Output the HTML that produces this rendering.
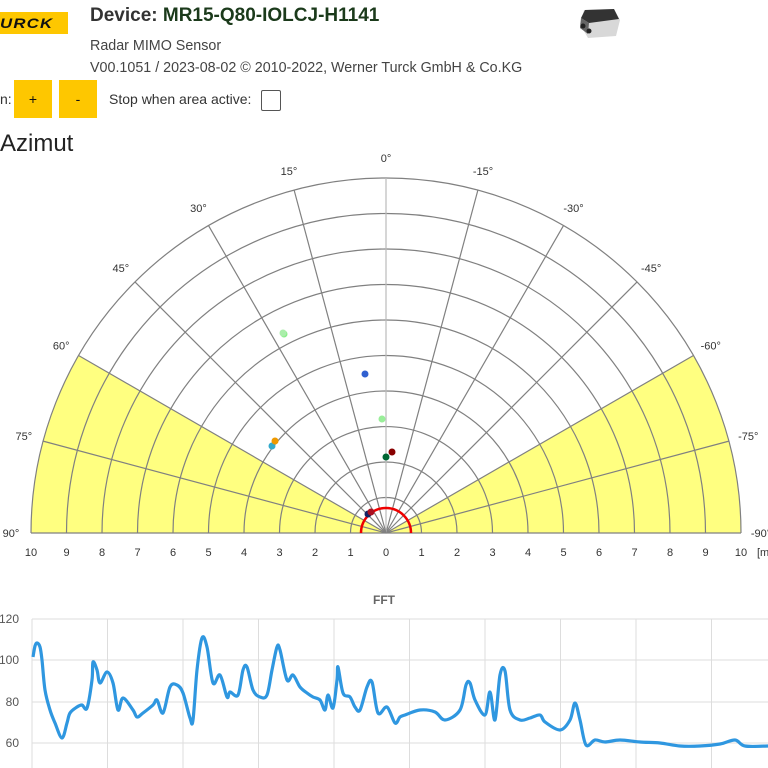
<!DOCTYPE html>
<html><head><meta charset="utf-8">
<style>
body{margin:0;width:768px;height:768px;overflow:hidden;background:#fff;font-family:"Liberation Sans",Arial,sans-serif;position:relative}
.a{position:absolute;white-space:nowrap}
.btn{position:absolute;background:#fec700;width:38px;height:38px;top:80px;text-align:center;line-height:38px;font-size:14px;color:#111}
</style></head><body>
<div class="a" style="left:0;top:12px;width:68px;height:22px;background:#fec700"></div>
<div class="a" style="left:0;top:15px;font:italic 900 14px 'Liberation Sans';letter-spacing:1px;color:#111;transform:scaleX(1.2);transform-origin:0 0">URCK</div>
<div class="a" style="left:90px;top:5px;font-size:19px;font-weight:bold;color:#333">Device: <span style="color:#1b3a1b">MR15-Q80-IOLCJ-H1141</span></div>
<div class="a" style="left:90px;top:38px;font-size:14.3px;color:#444">Radar MIMO Sensor</div>
<div class="a" style="left:90px;top:60px;font-size:14.3px;color:#444">V00.1051 / 2023-08-02 © 2010-2022, Werner Turck GmbH &amp; Co.KG</div>
<div class="a" style="left:0;top:91px;font-size:14px;color:#333">n:</div>
<div class="btn" style="left:14px">+</div>
<div class="btn" style="left:59px">-</div>
<div class="a" style="left:109px;top:91px;font-size:14px;color:#333">Stop when area active:</div>
<div class="a" style="left:261px;top:90px;width:18px;height:19px;border:1px solid #555;border-radius:2px"></div>
<div class="a" style="left:0;top:130px;font-size:24px;color:#222">Azimut</div>
<svg class="a" style="left:576px;top:6px" width="48" height="36"><path d="M8,4 L38,3 L44,14 L40,30 L12,32 L4,18 Z" fill="#d8d8d8"/><path d="M9,4 L38,3 L43,13 L13,17 L5,12 Z" fill="#333"/><path d="M5,12 L13,17 L12,28 L4,22 Z" fill="#666"/><circle cx="7" cy="20" r="2.5" fill="#222"/><circle cx="13" cy="25" r="2.5" fill="#222"/></svg>
<svg id="s" class="a" style="left:0;top:0" width="768" height="768" font-family="Liberation Sans, Arial, sans-serif"></svg>
<script>
var s=document.getElementById('s'),h='';
var cx=386,cy=533,R=355,k=35.5;
function P(r,a){a=a*Math.PI/180;return [cx-r*Math.sin(a),cy-r*Math.cos(a)];}
function wedge(a1,a2){var p1=P(R,a1),p2=P(R,a2);return 'M'+cx+','+cy+'L'+p1+'A'+R+','+R+' 0 0,'+(a2>a1?0:1)+' '+p2+'Z';}
h+='<path d="'+wedge(60,90)+'" fill="#ffff80"/>';
h+='<path d="'+wedge(-60,-90)+'" fill="#ffff80"/>';
for(var i=1;i<=10;i++){var r=i*k;h+='<path d="M'+(cx-r)+','+cy+'A'+r+','+r+' 0 0,1 '+(cx+r)+','+cy+'" fill="none" stroke="#808080" stroke-width="1.2"/>';}
for(var a=-90;a<=90;a+=15){var p=P(R,a);h+='<line x1="'+cx+'" y1="'+cy+'" x2="'+p[0]+'" y2="'+p[1]+'" stroke="'+(a==0?'#bbb':'#808080')+'" stroke-width="1.2"/>';
var q=P(375,a);h+='<text x="'+q[0]+'" y="'+(q[1]+4)+'" font-size="11" text-anchor="middle" fill="#333">'+a+'°</text>';}
h+='<path d="M361,533A25,25 0 0,1 411,533" fill="none" stroke="#e00" stroke-width="2.5"/>';
for(var i=-10;i<=10;i++){h+='<text x="'+(cx+i*k)+'" y="556" font-size="11" text-anchor="middle" fill="#333">'+Math.abs(i)+'</text>';}
h+='<text x="757" y="556" font-size="11" fill="#333">[m</text>';
var dots=[[284,334,'#8e8'],[283,333,'#aea'],[365,374,'#3060d0'],[382,419,'#9e9'],[386,457,'#063'],[392,452,'#800'],[272,446,'#3ac'],[275,441,'#e90'],[368,514,'#126'],[371,512,'#a12']];
dots.forEach(function(d){h+='<circle cx="'+d[0]+'" cy="'+d[1]+'" r="3.5" fill="'+d[2]+'"/>';});
h+='<text x="384" y="604" font-size="12" font-weight="bold" text-anchor="middle" fill="#666">FFT</text>';
[[120,619],[100,660],[80,702],[60,743]].forEach(function(t){h+='<line x1="32" y1="'+t[1]+'" x2="768" y2="'+t[1]+'" stroke="#ddd"/><text x="19" y="'+(t[1]+4)+'" font-size="12" text-anchor="end" fill="#555">'+t[0]+'</text>';});
for(var x=32;x<768;x+=75.5){h+='<line x1="'+x+'" y1="619" x2="'+x+'" y2="768" stroke="#ddd"/>';}
var pts="33,657 35,646 37,643 40,647 42,660 45,690 50,710 55,723 62,738 67,723 70,713 77,707 82,705 87,708 92,680 93,662 97,670 100,683 107,672 113,683 118,710 123,698 133,710 137,717 143,713 153,705 157,700 163,713 170,687 177,685 183,693 190,718 193,720 197,670 202,638 207,647 213,683 220,675 227,697 230,692 238,695 243,670 247,667 253,690 260,697 267,695 272,670 277,647 280,650 287,680 293,675 300,687 307,693 313,697 320,700 325,710 328,695 333,708 337,680 338,667 343,693 350,697 355,707 360,710 367,687 372,682 378,713 387,707 395,723 400,717 405,715 420,710 435,712 445,720 460,710 466,685 470,683 475,700 485,715 490,692 495,720 500,675 505,671 510,710 520,720 530,718 540,715 545,722 560,730 570,720 575,703 580,720 586,745 595,740 605,742 620,740 640,742 660,743 680,746 700,746 720,744 735,740 745,746 768,746";
var a2=pts.split(' ').map(function(p){return p.split(',').map(Number);});
var d='M'+a2[0];
for(var i=0;i<a2.length-1;i++){var p0=a2[i-1]||a2[i],p1=a2[i],p2=a2[i+1],p3=a2[i+2]||p2;
var c1=[p1[0]+(p2[0]-p0[0])/6,p1[1]+(p2[1]-p0[1])/6],c2=[p2[0]-(p3[0]-p1[0])/6,p2[1]-(p3[1]-p1[1])/6];
d+='C'+c1+' '+c2+' '+p2;}
h+='<path d="'+d+'" fill="none" stroke="#2f97e0" stroke-width="3.2" stroke-linejoin="round"/>';
s.innerHTML=h;
</script>
</body></html>
